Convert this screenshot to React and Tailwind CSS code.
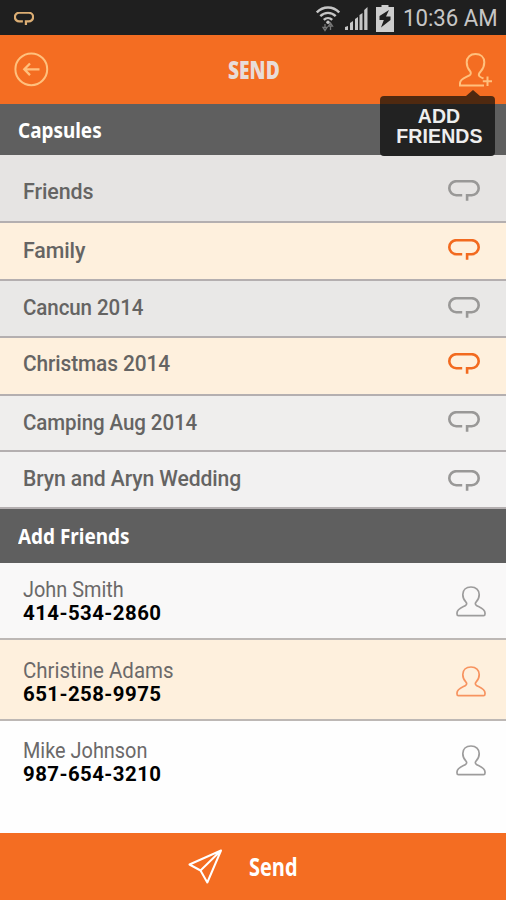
import clsx from 'clsx';

const capsules = [
    { name: 'Friends', row: 'h-[68px] bg-[#e6e4e3] pt-[6px]', text: 'mt-[2px] scale-x-[0.975]', icon: '-mt-[1px]' },
    { name: 'Family', row: 'h-[58px]', text: '-mt-[1px] scale-x-[0.970]', icon: '-mt-[4px]', selected: true },
    { name: 'Cancun 2014', row: 'h-[57px] bg-[#e9e8e7]', text: '-mt-[1px] scale-x-[0.934]', icon: '-mt-[2px]' },
    { name: 'Christmas 2014', row: 'h-[58px]', text: '-mt-[4px] scale-x-[0.948]', icon: '-mt-[5px]', selected: true },
    { name: 'Camping Aug 2014', row: 'h-[56px] bg-[#efeeed] pt-[1px]', text: '-mt-[1px] scale-x-[0.933]', icon: '-mt-[5px]' },
    { name: 'Bryn and Aryn Wedding', row: 'h-[57px] bg-[#f2f1f1]', text: '-mt-[1px] scale-x-[0.960]', icon: 'mt-[2px]' },
];

const friends = [
    { name: 'John Smith', phone: '414-534-2860', row: 'h-[77px] bg-[#f9f8f8] pt-[14px]', text: 'scale-x-[0.925]', icon: 'mt-[9px]' },
    { name: 'Christine Adams', phone: '651-258-9975', row: 'h-[81px] pt-[18px]', text: 'scale-x-[0.952]', icon: 'mt-[8px]', selected: true },
    { name: 'Mike Johnson', phone: '987-654-3210', row: 'flex-1 bg-[#fefefe] pt-[17px]', text: 'scale-x-[0.925]', icon: 'mt-[7px]' },
];

const CapsuleIcon = ({ className, strokeWidth = 2.6 }) => (
    <svg className={className} viewBox="0 0 32 21" fill="none" stroke="currentColor" strokeWidth={strokeWidth}>
        <path d="M14.2 15.2H8.3a7 7 0 0 1 0-14h15.4a7 7 0 0 1 0 14H19.1V20.8" />
    </svg>
);

const PersonIcon = ({ className }) => (
    <svg className={className} viewBox="0 0 30 31" fill="none" stroke="currentColor" strokeWidth="1.7" strokeLinejoin="round">
        <path d="M15 1C10 1 6.800 4 6.800 8.500c0 3.200 1.200 5.500 3 7.300 1.200 1.200 1.200 2.800-.3 3.700C7 21 1 22.500 1 27v1c0 1.200.5 1.700 1.500 1.700h25c1 0 1.500-.5 1.500-1.700v-1c0-4.500-6-6-8.500-7.500-1.500-.9-1.500-2.500-.3-3.700 1.800-1.800 3-4.100 3-7.300C23.200 4 20 1 15 1Z" />
    </svg>
);

const StatusBar = () => (
    <div className="flex h-[35px] shrink-0 items-center bg-[#1f1f1f] pl-[14px] pr-[9px] text-[#c6c6c6]">
        <CapsuleIcon className="mt-[2px] h-[13px] w-[20px] text-[#dcae74]" strokeWidth={3.6} />
        <div className="flex-1" />
        <svg className="mr-[5px] mt-[2px] h-[26px] w-[24px]" viewBox="0 0 24 26" fill="none" stroke="currentColor" strokeWidth="2.4">
            <path d="M.8 6.500C7-.2 17-.2 23.200 6.500M4.300 10.200c4.400-4.400 11-4.400 15.400 0M7.800 13.800c2.400-2.300 6-2.300 8.400 0" />
            <circle cx="12" cy="16.200" r="1.700" fill="currentColor" stroke="none" />
            <path d="M7 21.500h4l-2 3zM9 18v4M12.500 20h4l-2-3zM14.500 20v4" stroke="#777" strokeWidth="1.300" />
        </svg>
        <svg className="mr-[8px] mt-[2px] h-[24px] w-[23px]" viewBox="0 0 23 24" fill="currentColor">
            <path d="M0 23v-3l3-1v4zM5 23v-7l3-2v9zM10 23V12l3-2v13zM14.500 23V8l3-2v17zM19.200 23V3l3.300-3v23z" />
        </svg>
        <svg className="mr-[9px] mt-[2px] h-[27px] w-[18px]" viewBox="0 0 18 27">
            <path d="M5.500 0h7v2H18v25H0V2h5.500z" fill="#cecece" />
            <path d="M13 5 3.500 11v4h4.300L5 22.500l9.500-7.500v-3.500H10z" fill="#1f1f1f" />
        </svg>
        <span className="mt-[2px] w-[94px] origin-left scale-x-[0.965] whitespace-nowrap font-[Roboto] text-[23px] leading-none">10:36 AM</span>
    </div>
);

const Header = () => (
    <div className="relative flex h-[69px] shrink-0 items-center justify-between bg-[#f46d22] pl-[14px] pr-[14px]">
        <svg className="h-[35px] w-[35px] text-[#ffc07d]" viewBox="0 0 35 35" fill="none" stroke="currentColor" strokeWidth="2">
            <circle cx="17.300" cy="17.300" r="15.900" />
            <path d="M25.500 17.300H10.500M16 11.500l-5.700 5.800 5.700 5.800" strokeWidth="2.300" />
        </svg>
        <span className="absolute left-[228px] top-[22px] w-[60px] origin-left scale-x-[0.800] font-['Open_Sans'] text-[24px] leading-[26px] font-extrabold text-[#e8dcd8]">SEND</span>
        <svg className="h-[36px] w-[34px] text-[#ffc07d]" viewBox="0 0 34 36" fill="none" stroke="currentColor" strokeWidth="2">
            <path d="M25.500 26.500c-2.500-1-4.500-1.800-4.700-3.500-.1-1.500.8-2.500 2.200-4 2.200-2.400 3.300-5.500 3.300-8.700 0-5.300-3.800-8.300-8.800-8.300s-8.800 3-8.800 8.300c0 3.200 1.100 6.300 3.300 8.700 1.100 1.300 1.200 3.400-.5 4.300C8 25.300 2 27 2 31v2.500h24" />
            <path d="M29.500 24.500v9.500M24.800 29.300h9.400" />
        </svg>
        <div className="absolute right-[11px] top-[55px] z-10">
            <div className="ml-[86px] h-0 w-0 border-x-[7px] border-b-[6px] border-x-transparent border-b-[#4f2910]" />
            <div className="h-[60px] w-[115px] rounded-[4px] bg-[linear-gradient(#4f2910_0_8px,#222222_8px)] pt-[10px] text-center font-['Liberation_Sans'] text-[19.500px] leading-[20px] font-bold tracking-[0.1px] text-[#eee]">
                <div className="pl-[3px]">ADD</div>
                <div className="pl-[4px]">FRIENDS</div>
            </div>
        </div>
    </div>
);

const SectionTitle = ({ children, className }) => (
    <div className={clsx("flex shrink-0 items-center bg-[#5f5f5f] pl-[18px] font-['Noto_Sans'] text-[22px] font-bold text-white", className)}>
        <span className="-mt-[2px] origin-left scale-x-[0.860] whitespace-nowrap leading-none">{children}</span>
    </div>
);

const CapsuleRow = ({ capsule }) => (
    <div className={clsx('flex shrink-0 items-center justify-between border-b-2 border-[#b4afb0] pl-[23px] pr-[26px]', capsule.row, capsule.selected && 'bg-[#fef0dd]')}>
        <span className={clsx('origin-left whitespace-nowrap font-[Roboto] text-[22px] leading-none font-medium tracking-[-0.1px] text-[#656463]', capsule.text)}>{capsule.name}</span>
        <CapsuleIcon className={clsx('h-[21px] w-[32px]', capsule.icon, capsule.selected ? 'text-[#f26a1f]' : 'text-[#999897]')} />
    </div>
);

const FriendRow = ({ friend }) => (
    <div className={clsx('flex items-start justify-between pl-[23px] pr-[20px]', friend.row, friend.selected && 'bg-[#fef0dd]', !friend.row.startsWith('flex-1') && 'border-b-2 border-[#bdb8b5]')}>
        <div className="whitespace-nowrap">
            <div className={clsx('origin-left font-[Roboto] text-[21.500px] leading-[25px] text-[#6b6969]', friend.text)}>{friend.name}</div>
            <div className="origin-left scale-x-[0.972] font-[Roboto] text-[21px] leading-[23px] font-bold tracking-[0.450px] text-black">{friend.phone}</div>
        </div>
        <PersonIcon className={clsx('h-[31px] w-[30px]', friend.icon, friend.selected ? 'text-[#f7935f]' : 'text-[#9d9c9c]')} />
    </div>
);

const App = () => {
    return (
        <div className="flex h-[900px] w-[506px] flex-col overflow-hidden bg-white">
            <StatusBar />
            <Header />
            <SectionTitle className="h-[51px]">Capsules</SectionTitle>
            {capsules.map((capsule) => (
                <CapsuleRow key={capsule.name} capsule={capsule} />
            ))}
            <SectionTitle className="h-[54px]">Add Friends</SectionTitle>
            {friends.map((friend) => (
                <FriendRow key={friend.phone} friend={friend} />
            ))}
            <button className="flex h-[67px] shrink-0 items-center bg-[#f46d22] pl-[188px] text-white">
                <svg className="h-[35px] w-[35px]" viewBox="0 0 35 35" fill="none" stroke="currentColor" strokeWidth="2" strokeLinejoin="round">
                    <path d="M33 1.500 1.500 15.500l11 6L19.300 33.500zM12.500 21.500 33 1.500" />
                </svg>
                <span className="ml-[26px] origin-left scale-x-[0.800] font-['Open_Sans'] text-[25px] leading-none font-bold">Send</span>
            </button>
        </div>
    );
};

export default App;
